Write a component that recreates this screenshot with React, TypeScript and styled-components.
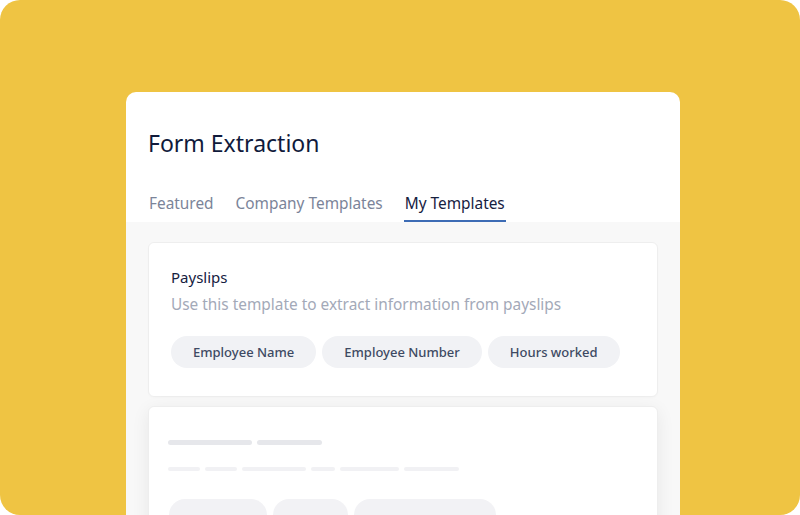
import React from 'react';
import styled, { createGlobalStyle } from 'styled-components';

const GlobalStyle = createGlobalStyle`
  html, body {
    margin: 0;
    padding: 0;
    background: #ffffff;
  }
  body {
    font-family: "Noto Sans", "Open Sans", sans-serif;
    -webkit-font-smoothing: antialiased;
  }
`;

const Backdrop = styled.div`
  width: 800px;
  height: 515px;
  background: #efc443;
  border-radius: 20px;
  overflow: hidden;
  display: flex;
  justify-content: center;
  padding-top: 92px;
  box-sizing: border-box;
`;

const Panel = styled.div`
  width: 554px;
  height: 460px;
  margin-left: 6px;
  background: #ffffff;
  border-radius: 10px 10px 0 0;
  display: flex;
  flex-direction: column;
  overflow: hidden;
`;

const Header = styled.div`
  padding: 35px 22px 0;
`;

const Title = styled.h1`
  margin: 0;
  font-size: 23px;
  line-height: 32px;
  font-weight: 400;
  color: #101a3b;
`;

const Tabs = styled.div`
  display: flex;
  gap: 20px;
  margin-top: 34px;
`;

const Tab = styled.div<{ $active?: boolean }>`
  font-size: 15.4px;
  line-height: 22px;
  padding: 0 1px 5px;
  color: ${(p) => (p.$active ? '#16213f' : '#7b8499')};
  border-bottom: 2px solid ${(p) => (p.$active ? '#3d6cb5' : 'transparent')};
`;

const Body = styled.div`
  flex: 1;
  background: #f8f8f8;
  padding: 20px 22px 0;
  display: flex;
  flex-direction: column;
  gap: 9px;
`;

const Card = styled.div<{ $raised?: boolean }>`
  background: #ffffff;
  border: 1px solid #eeeeee;
  border-radius: 6px;
  padding: ${(p) => (p.$raised ? '24px 19px 28px' : '23px 22px 28px')};
  box-shadow: ${(p) => (p.$raised ? '0 4px 18px rgba(0, 0, 0, 0.07)' : '0 1px 2px rgba(0, 0, 0, 0.02)')};
`;

const CardTitle = styled.div`
  font-size: 15px;
  line-height: 22px;
  color: #16213f;
`;

const CardText = styled.div`
  font-size: 15.4px;
  line-height: 24px;
  color: #a3a9b8;
  margin-top: 5px;
`;

const ChipRow = styled.div<{ $indent?: number; $top?: number }>`
  display: flex;
  gap: 6px;
  margin-top: ${(p) => p.$top ?? 19}px;
  padding-left: ${(p) => p.$indent ?? 0}px;
`;

const Chip = styled.div`
  height: 32px;
  padding: 0 22px;
  border-radius: 16px;
  background: #f1f2f5;
  color: #3e4a63;
  font-size: 13px;
  font-weight: 500;
  white-space: nowrap;
  display: flex;
  align-items: center;
`;

const SkelRow = styled.div<{ $gap: number; $top: number }>`
  display: flex;
  gap: ${(p) => p.$gap}px;
  margin-top: ${(p) => p.$top}px;
`;

const SkelBar = styled.div<{ $w: number; $light?: boolean }>`
  width: ${(p) => p.$w}px;
  height: ${(p) => (p.$light ? 4 : 5)}px;
  border-radius: 3px;
  background: ${(p) => (p.$light ? '#f1f1f4' : '#e6e7eb')};
`;

const SkelChip = styled.div<{ $w: number }>`
  width: ${(p) => p.$w}px;
  height: 32px;
  border-radius: 16px;
  background: #f2f2f5;
`;

const tabs = ['Featured', 'Company Templates', 'My Templates'];
const fields = ['Employee Name', 'Employee Number', 'Hours worked'];

export default function App() {
  return (
    <>
      <GlobalStyle />
      <Backdrop>
        <Panel>
          <Header>
            <Title>Form Extraction</Title>
            <Tabs>
              {tabs.map((t) => (
                <Tab key={t} $active={t === 'My Templates'}>
                  {t}
                </Tab>
              ))}
            </Tabs>
          </Header>
          <Body>
            <Card>
              <CardTitle>Payslips</CardTitle>
              <CardText>Use this template to extract information from payslips</CardText>
              <ChipRow>
                {fields.map((f) => (
                  <Chip key={f}>{f}</Chip>
                ))}
              </ChipRow>
            </Card>
            <Card $raised>
              <SkelRow $gap={5} $top={9}>
                <SkelBar $w={84} />
                <SkelBar $w={65} />
              </SkelRow>
              <SkelRow $gap={5} $top={22}>
                <SkelBar $light $w={32} />
                <SkelBar $light $w={32} />
                <SkelBar $light $w={64} />
                <SkelBar $light $w={24} />
                <SkelBar $light $w={59} />
                <SkelBar $light $w={55} />
              </SkelRow>
              <ChipRow $indent={1} $top={28}>
                <SkelChip $w={98} />
                <SkelChip $w={75} />
                <SkelChip $w={142} />
              </ChipRow>
            </Card>
          </Body>
        </Panel>
      </Backdrop>
    </>
  );
}
